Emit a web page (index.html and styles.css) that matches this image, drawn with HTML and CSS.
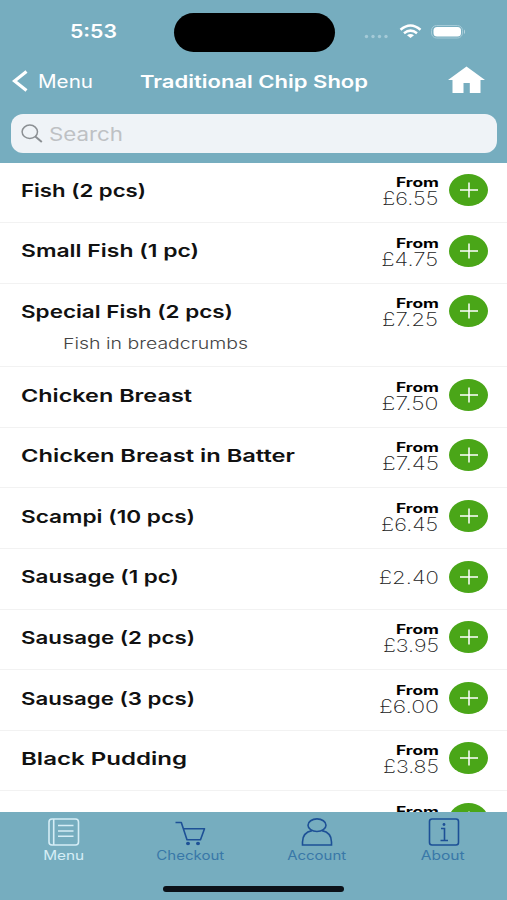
FILE: index.html
```html
<!DOCTYPE html>
<html lang="en">
<head>
<meta charset="utf-8">
<title>Traditional Chip Shop</title>
<link rel="stylesheet" href="styles.css">
</head>
<body>
<div class="phone">
  <header class="header">
    <div class="status">
      <div class="clock"><span class="fit" data-width="47">5:53</span></div>
      <div class="island"></div>
      <svg class="indicators" width="102" height="18" viewBox="0 0 102 18">
        <g fill="#a4cad7"><circle cx="3.500" cy="14.500" r="1.700"/><circle cx="10" cy="14.500" r="1.700"/><circle cx="16.500" cy="14.500" r="1.700"/><circle cx="23" cy="14.500" r="1.700"/></g>
        <g fill="none" stroke="#fff" stroke-width="2.500"><path d="M37.500 7.800Q47.500-.8 57.500 7.800"/><path d="M41 11.200Q47.500 6 54 11.200"/></g>
        <path d="M44 13.200Q47.500 10.600 51 13.200L47.500 16Z" fill="#fff"/>
        <rect x="68.500" y="3.500" width="31" height="12.500" rx="5" fill="none" stroke="#a4cad7"/>
        <rect x="70.500" y="5" width="27.500" height="9.500" rx="3.500" fill="#fff"/>
        <path d="M101 7.500Q103.500 9.700 101 12Z" fill="#b4d3de"/>
      </svg>
    </div>
    <div class="nav">
      <div class="back">
        <svg width="16" height="22" viewBox="0 0 16 22"><path d="M14.500 1.500L2.500 11L14.500 20.500" fill="none" stroke="#fff" stroke-width="3.200"/></svg>
        <span class="fit" data-width="55">Menu</span>
      </div>
      <h1><span class="fit" data-width="228">Traditional Chip Shop</span></h1>
      <svg class="home" width="37" height="28" viewBox="0 0 37 28"><path d="M18.500 .5L37 14H32.500V27H21.800V17H15.500V27H4.500V14H0Z" fill="#fff"/></svg>
    </div>
    <div class="search">
      <svg width="22" height="19" viewBox="0 0 22 19" fill="none" stroke="#8b8f93"><ellipse cx="8.800" cy="7.800" rx="7.700" ry="6.700" stroke-width="1.500"/><path d="M14.300 12.500L20.800 18" stroke-width="2"/></svg>
      <span class="fit" data-width="74">Search</span>
    </div>
  </header>
  <main class="list" id="list"></main>
  <footer class="tabs">
    <div class="tab active">
      <svg width="32" height="28" viewBox="0 0 32 28" fill="none" stroke="currentColor" stroke-width="1.600"><rect x="1" y="1" width="29.500" height="26" rx="3"/><path d="M5.700 1V27M10 7.500H25.500M10 13H25.500M10 18.300H25.500"/></svg>
      <span class="fit" data-width="41">Menu</span>
    </div>
    <div class="tab">
      <svg width="32" height="28" viewBox="0 0 32 28" fill="none" stroke="currentColor" stroke-width="1.600"><path d="M.5 4.500H6.300L12 21.800H25.500L29.500 10.800H8.500" stroke-linejoin="round"/><g fill="currentColor" stroke="none"><ellipse cx="13" cy="25.500" rx="2" ry="1.700"/><ellipse cx="23" cy="25.500" rx="2" ry="1.700"/></g></svg>
      <span class="fit" data-width="68">Checkout</span>
    </div>
    <div class="tab">
      <svg width="32" height="28" viewBox="0 0 32 28" fill="none" stroke="currentColor" stroke-width="1.600"><ellipse cx="16" cy="7.200" rx="9" ry="6.300"/><path d="M11 12.600C5 13.800 1.500 18 1.500 24V27H30.500V24C30.500 18 27 13.800 21 12.600"/></svg>
      <span class="fit" data-width="59">Account</span>
    </div>
    <div class="tab">
      <svg width="32" height="28" viewBox="0 0 32 28" fill="none" stroke="currentColor" stroke-width="1.600"><rect x="1.500" y="1" width="29" height="26" rx="2.500"/><path d="M13 10.500H16.500V22.500M12.500 22.500H20"/><circle cx="16" cy="6.500" r="1.400" fill="currentColor" stroke="none"/></svg>
      <span class="fit" data-width="44">About</span>
    </div>
    <div class="home-bar"></div>
  </footer>
</div>
<script src="app.js"></script>
</body>
</html>
```
FILE: styles.css
```css
* { box-sizing: border-box; }
body { margin: 0; font-family: Inter, "Open Sans", sans-serif; }
.phone { width: 507px; height: 900px; display: flex; flex-direction: column; overflow: hidden; background: #fff; }
.fit { display: inline-block; transform-origin: 0 50%; white-space: nowrap; }

.header { flex: none; height: 162.500px; background: #76adbf; color: #fff; }
.status { height: 64px; display: grid; grid-template-columns: 173.500px 161px 1fr; align-items: center; }
.clock { padding-left: 70px; font-size: 18px; line-height: 20px; font-weight: 600; }
.island { height: 39px; border-radius: 20px; background: #000; }
.indicators { margin-left: 28px; margin-top: -2px; }
.nav { height: 35px; display: grid; grid-template-columns: 140px 1fr 59.500px; align-items: center; }
.back { display: flex; align-items: center; gap: 10px; padding-left: 11.500px; font-size: 18px; line-height: 24px; }
.back svg { margin-top: -1px; }
h1 { margin: 0; font-size: 17.500px; line-height: 24px; font-weight: 600; }
.home { margin-top: -3px; }
.search { margin: 15px 10px 0 11px; height: 38.500px; border-radius: 12px; background: #eff3f7; display: flex; align-items: center; gap: 6px; padding-left: 10px; color: #bec1c4; font-size: 18.500px; line-height: 24px; }
.search .fit { margin-top: 1px; }

.list { flex: 1; min-height: 0; overflow: hidden; }
.row { height: 60.600px; padding: 12px 19px 0 21px; display: grid; grid-template-columns: 1fr auto 39px; column-gap: 10.500px; border-bottom: 1px solid #f2f2f2; }
.row.tall { height: 83.600px; }
.title { margin-left: -.5px; font-size: 17.700px; line-height: 32px; padding-top: .4px; font-weight: 600; color: #111; }
.note { margin-left: 42px; font-size: 15px; line-height: 32px; font-weight: 300; color: #444; }
.price { height: 33px; display: flex; flex-direction: column; align-items: flex-end; justify-content: center; }
.price .fit { transform-origin: 100% 50%; }
.from { font-size: 12.500px; line-height: 15px; font-weight: 700; color: #000; }
.amount { font-size: 18px; line-height: 17px; font-weight: 200; color: #222; }
.add { width: 39px; height: 32px; margin-top: -.5px; border-radius: 50%; background: #4aa618; display: grid; place-items: center; }

.tabs { flex: none; height: 88px; padding-top: 5.500px; background: #76adbf; display: grid; grid-template-columns: repeat(4, 126.600px); grid-template-rows: 68px 6px; }
.tab { display: flex; flex-direction: column; align-items: center; font-size: 12.500px; line-height: 20px; color: #1d5096; }
.tab svg { margin-left: 1.500px; }
.tab .fit { transform-origin: 50% 50%; color: #3978a8; }
.tab.active, .tab.active .fit { color: #d5edf6; }
.home-bar { grid-column: 1 / -1; justify-self: center; margin-top: .5px; width: 181px; height: 5.500px; border-radius: 3px; background: #0b1118; }
```
FILE: app.js
```js
const items = [
  ["Fish (2 pcs)", 125, "£6.55", 56, true],
  ["Small Fish (1 pc)", 178, "£4.75", 57, true],
  ["Special Fish (2 pcs)", 212, "£7.25", 56, true, "Fish in breadcrumbs", 185],
  ["Chicken Breast", 171, "£7.50", 57, true],
  ["Chicken Breast in Batter", 274, "£7.45", 57, true],
  ["Scampi (10 pcs)", 174, "£6.45", 57, true],
  ["Sausage (1 pc)", 158, "£2.40", 60, false],
  ["Sausage (2 pcs)", 174, "£3.95", 56, true],
  ["Sausage (3 pcs)", 174, "£6.00", 60, true],
  ["Black Pudding", 166, "£3.85", 56, true],
  ["Haggis", 71, "£3.85", 56, true]
];

document.getElementById("list").innerHTML = items.map(([name, width, price, priceWidth, from, note, noteWidth]) => `
  <div class="row ${note ? "tall" : ""}">
    <div>
      <div class="title"><span class="fit" data-width="${width}">${name}</span></div>
      ${note ? `<div class="note"><span class="fit" data-width="${noteWidth}">${note}</span></div>` : ""}
    </div>
    <div class="price">
      ${from ? `<span class="from fit" data-width="43">From</span>` : ""}
      <span class="amount fit" data-width="${priceWidth}">${price}</span>
    </div>
    <div class="add"><svg width="20" height="16" viewBox="0 0 20 16"><path d="M1 8H19M10 .5V15.500" stroke="#fff" stroke-width="1.500"/></svg></div>
  </div>`).join("");

// Stretch each label to its display width.
document.querySelectorAll(".fit").forEach(el => {
  if (el.offsetWidth) el.style.transform = `scaleX(${el.dataset.width / el.getBoundingClientRect().width})`;
});
```
